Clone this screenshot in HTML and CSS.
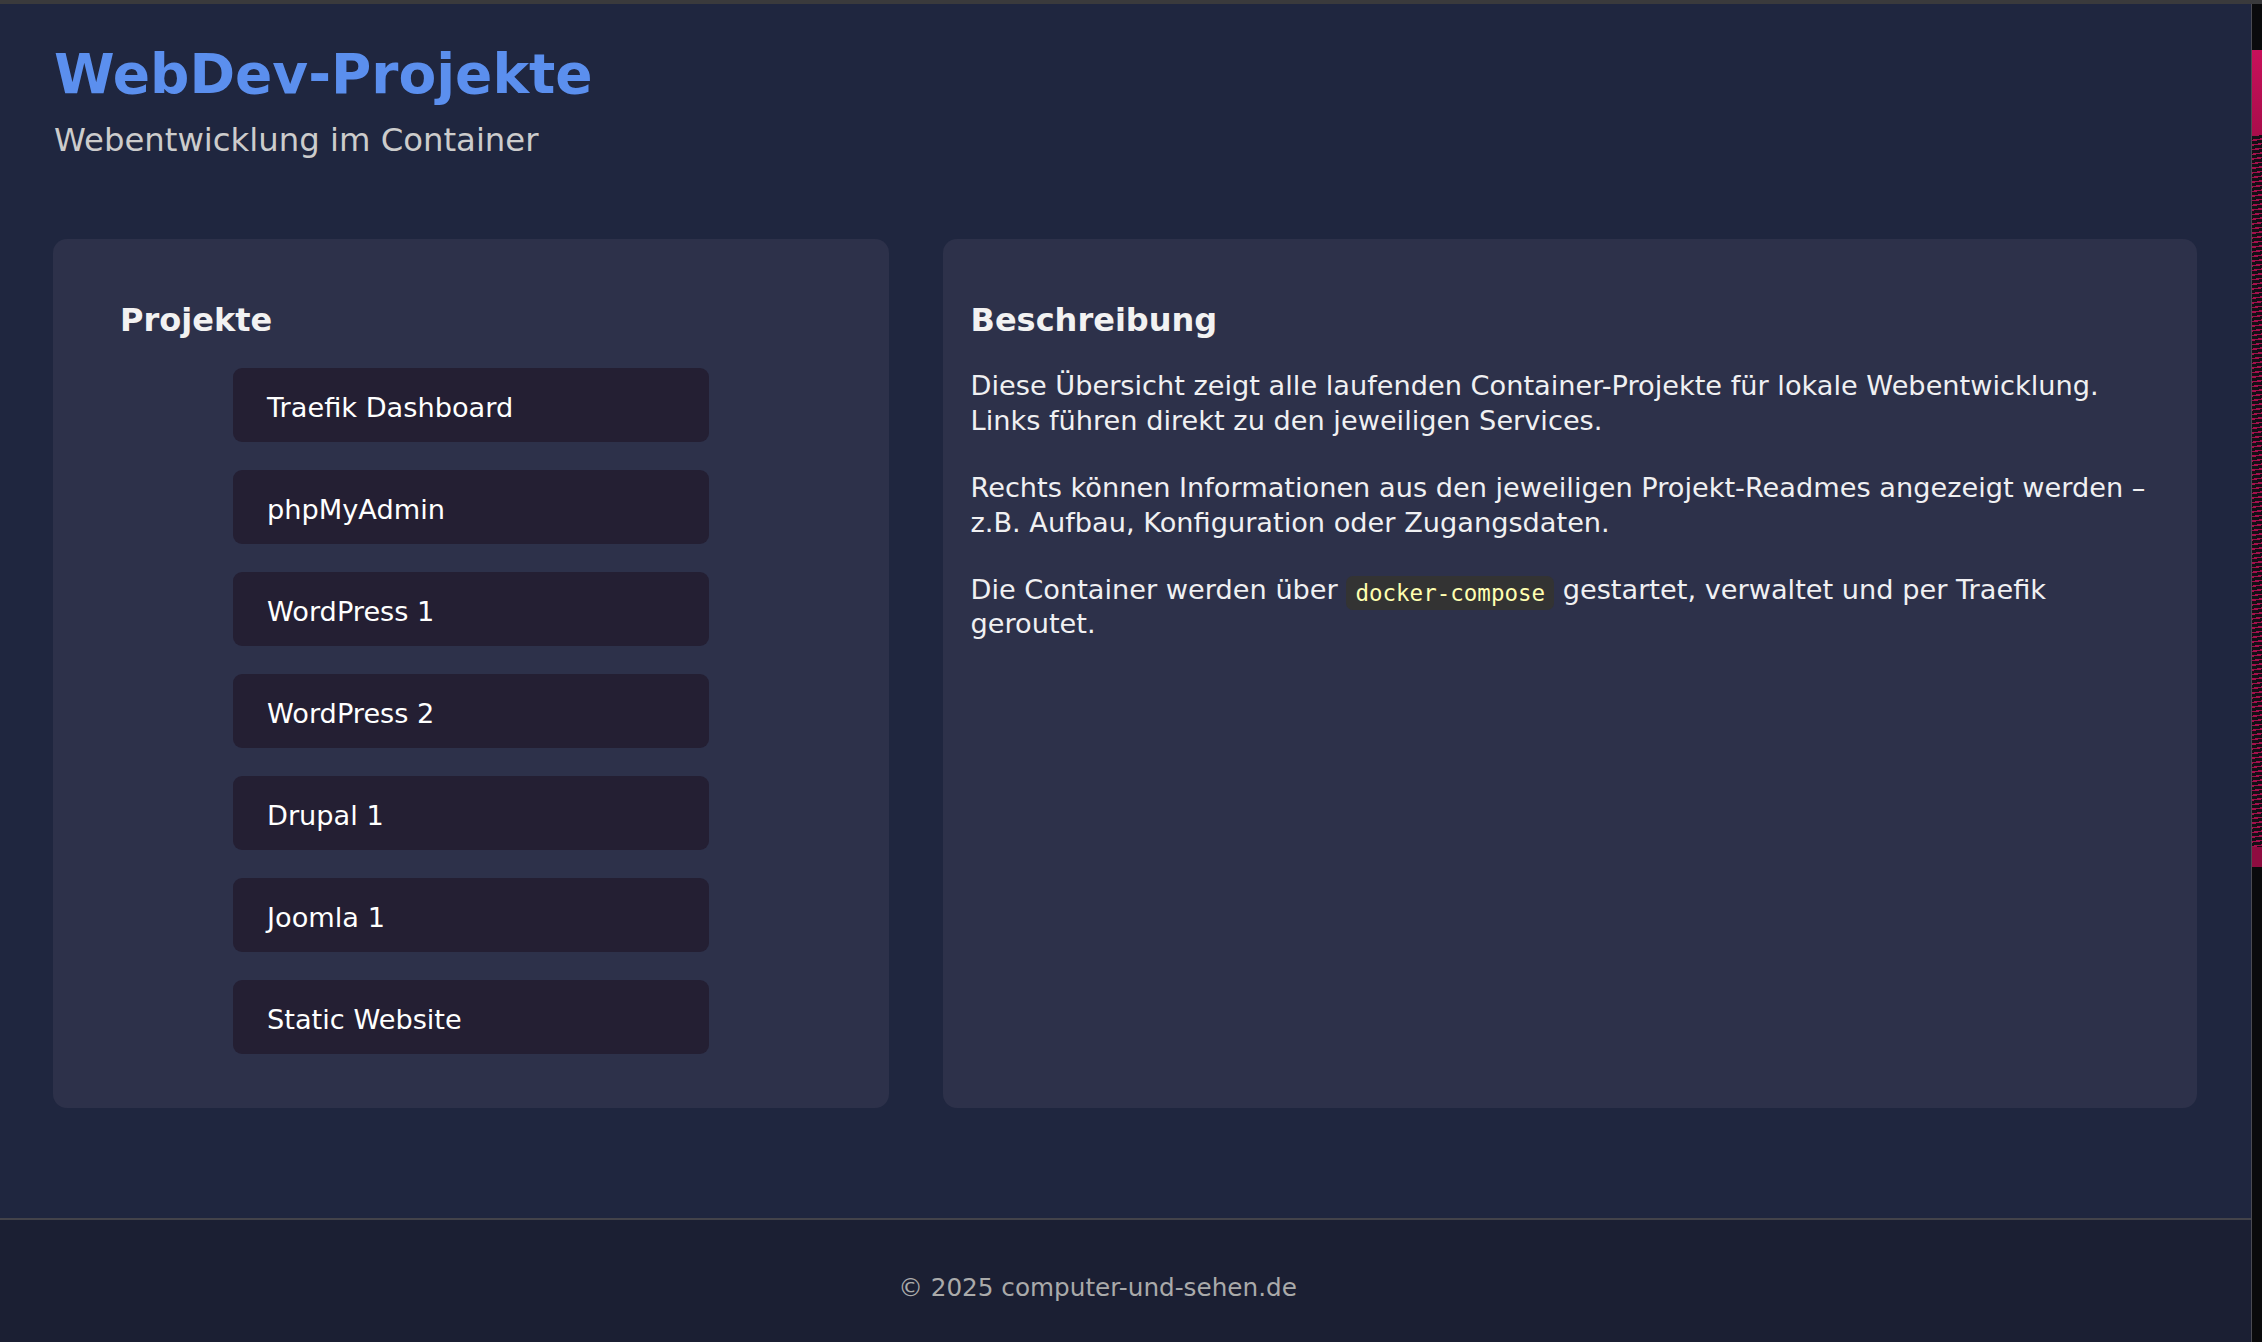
FILE: index.html
```html
<!DOCTYPE html>
<html lang="de">
<head>
<meta charset="utf-8">
<title>WebDev-Projekte</title>
<link rel="stylesheet" href="styles.css">
</head>
<body>
<div class="topbar"></div>
<div class="window">
  <div class="page">
    <header class="site-header">
      <h1 class="title">WebDev-Projekte</h1>
      <p class="subtitle">Webentwicklung im Container</p>
    </header>
    <main class="content">
      <section class="card card-projects">
        <h2 class="card-title card-title-projects">Projekte</h2>
        <ul class="project-list">
          <li><a class="project-link" href="#">Traefik Dashboard</a></li>
          <li><a class="project-link" href="#">phpMyAdmin</a></li>
          <li><a class="project-link" href="#">WordPress 1</a></li>
          <li><a class="project-link" href="#">WordPress 2</a></li>
          <li><a class="project-link" href="#">Drupal 1</a></li>
          <li><a class="project-link" href="#">Joomla 1</a></li>
          <li><a class="project-link" href="#">Static Website</a></li>
        </ul>
      </section>
      <section class="card card-desc">
        <h2 class="card-title card-title-desc">Beschreibung</h2>
        <p class="desc">Diese Übersicht zeigt alle laufenden Container-Projekte für lokale Webentwicklung.<br>Links führen direkt zu den jeweiligen Services.</p>
        <p class="desc">Rechts können Informationen aus den jeweiligen Projekt-Readmes angezeigt werden – z.B. Aufbau, Konfiguration oder Zugangsdaten.</p>
        <p class="desc">Die Container werden über <code class="code">docker-compose</code> gestartet, verwaltet und per Traefik geroutet.</p>
      </section>
    </main>
    <footer class="site-footer">
      <p class="footer-text">© 2025 computer-und-sehen.de</p>
    </footer>
  </div>
  <div class="rail">
    <div class="rail-mark">
      <div class="rail-head"></div>
      <div class="rail-stripes"></div>
      <div class="rail-foot"></div>
    </div>
  </div>
</div>
</body>
</html>
```
FILE: styles.css
```css
* { box-sizing: border-box; }

html, body {
  margin: 0;
  padding: 0;
  height: 100%;
  overflow: hidden;
}

body {
  font-family: "DejaVu Sans", Verdana, sans-serif;
  background: #1f263f;
  color: #eeeeee;
  display: flex;
  flex-direction: column;
  height: 1342px;
}

.topbar {
  height: 4px;
  flex: none;
  background: #3a3a3c;
}

.window {
  flex: 1;
  display: flex;
  min-height: 0;
}

.page {
  flex: 1;
  display: flex;
  flex-direction: column;
  background: #1f263f;
  min-width: 0;
}

.rail {
  width: 11px;
  flex: none;
  background: #0a0a0c;
  border-left: 1px solid #4a4a52;
}

.rail-mark {
  margin-top: 46px;
  display: flex;
  flex-direction: column;
}

.rail-head {
  height: 85px;
  background: linear-gradient(180deg, #c8105a 0%, #a90d4b 100%);
}

.rail-stripes {
  height: 712px;
  background: repeating-linear-gradient(172deg, #a30f4c 0 1.5px, #141016 1.5px 4.6px);
}

.rail-foot {
  height: 20px;
  background: #8e0c40;
}

.site-header {
  padding: 37px 54px 0 54px;
}

.title {
  margin: 0;
  font-size: 55px;
  line-height: 67px;
  font-weight: bold;
  color: #5b8fee;
}

.subtitle {
  margin: 14px 0 0 0;
  font-size: 32.3px;
  line-height: 37.6px;
  color: #cccccc;
}

.content {
  display: grid;
  grid-template-columns: 2fr 3fr;
  gap: 54px;
  padding: 79px 54px 110px 53px;
  align-items: stretch;
}

.card {
  background: #2d314a;
  border-radius: 14px;
  padding: 29px 24px 29px 27.5px;
}

.card-projects {
  padding: 29px;
}

.card-title {
  margin: 0;
  font-size: 32px;
  line-height: 37.2px;
  font-weight: bold;
  color: #f2f2f2;
}

.card-title-projects {
  margin: 34px 0 29px 38px;
}

.card-title-desc {
  margin: 34px 0 30.5px 0;
}

.project-list {
  list-style: none;
  margin: 0 0 25px 0;
  padding: 0;
  display: flex;
  flex-direction: column;
  gap: 28px;
}

.project-link {
  display: block;
  width: 476px;
  margin: 0 auto;
  height: 74px;
  padding: 24px 34px 18px 34px;
  background: #241f33;
  border-radius: 9px;
  color: #ffffff;
  text-decoration: none;
  font-size: 27.2px;
  line-height: 32px;
}

.desc {
  margin: 0 0 33px 0;
  font-size: 27.2px;
  line-height: 34.4px;
  color: #f0f0f2;
}

.code {
  font-family: "DejaVu Sans Mono", "Liberation Mono", monospace;
  font-size: 22.5px;
  background: #333333;
  color: #ffffb0;
  padding: 4px 9px;
  border-radius: 7px;
  vertical-align: -2px;
  line-height: 25px;
}

.site-footer {
  flex: none;
  border-top: 2px solid #43434a;
  background: #1b1f33;
  padding: 53px 56px 40px 0;
  text-align: center;
}

.footer-text {
  margin: 0;
  font-size: 24.7px;
  line-height: 29px;
  color: #aaaaaa;
}
```
